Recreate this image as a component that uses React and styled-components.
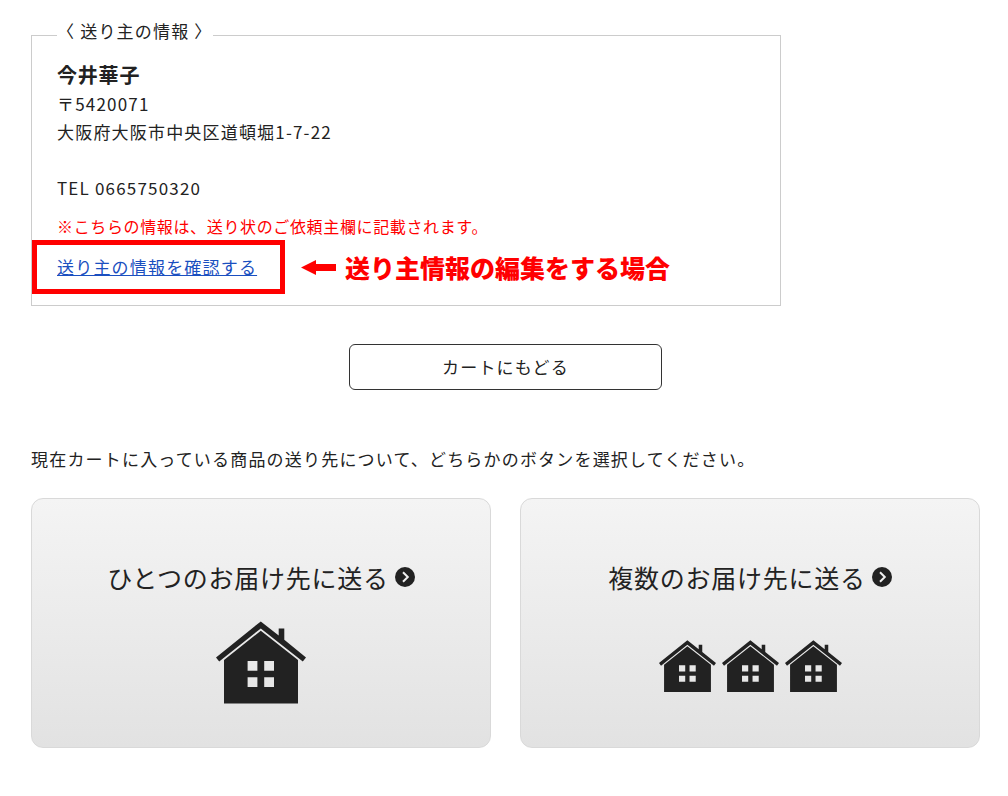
import React from 'react';
import styled, { createGlobalStyle } from 'styled-components';

const GlobalStyle = createGlobalStyle`
  * {
    box-sizing: border-box;
  }

  body {
    margin: 0;
    background: #fff;
    color: #222;
    font-family: 'Noto Sans CJK JP', 'Noto Sans', sans-serif;
    font-size: 17px;
    line-height: 28px;
    letter-spacing: 0.07em;
  }

  button {
    font: inherit;
    letter-spacing: inherit;
    color: inherit;
    cursor: pointer;
  }
`;

const Page = styled.main`
  padding: 17px 28px 48px 31px;
`;

const SenderBox = styled.fieldset`
  max-width: 750px;
  margin: 0;
  padding: 7px 25px 24px;
  border: 1px solid #ccc;
`;

const SenderTitle = styled.legend`
  padding: 0 0 8px;
`;

const SenderName = styled.p`
  margin: 0;
  font-size: 20px;
  font-weight: 700;
  line-height: 30px;
  letter-spacing: 0.04em;
`;

const Address = styled.address`
  font-style: normal;
`;

const Tel = styled.p`
  margin: 28px 0 0;
`;

const Note = styled.p`
  margin: 10px 0 0;
  color: #f00;
  font-size: 16px;
  letter-spacing: 0.04em;
`;

const EditRow = styled.div`
  display: flex;
  align-items: center;
  gap: 44px;
  margin-top: 13px;
`;

const EditLink = styled.a`
  position: relative;
  color: #1a4fc0;
  text-decoration: underline;

  &::after {
    content: '';
    position: absolute;
    inset: -13px -28px -13px -25px;
    border: 5px solid #f00;
    pointer-events: none;
  }
`;

const Hint = styled.strong`
  display: flex;
  align-items: center;
  gap: 9px;
  color: #f00;
  font-size: 25px;
  font-weight: 900;
  letter-spacing: 0;
`;

const BackButton = styled.button`
  display: block;
  width: 33%;
  min-width: 240px;
  margin: 38px auto 0;
  padding: 8px 16px;
  border: 1px solid #333;
  border-radius: 6px;
  background: #fff;
`;

const Lead = styled.p`
  margin: 55px 0 0;
`;

const Choices = styled.div`
  display: grid;
  grid-template-columns: 1fr 1fr;
  gap: 29px;
  margin-top: 25px;
`;

const Choice = styled.button`
  padding: 60px 16px 40px;
  border: 1px solid #d9d9d9;
  border-radius: 12px;
  background: linear-gradient(#f4f4f4, #e2e2e2);
`;

const ChoiceTitle = styled.span`
  display: flex;
  align-items: center;
  justify-content: center;
  gap: 6px;
  font-size: 25px;
  line-height: 36px;
  letter-spacing: 0.03em;
`;

const Houses = styled.span`
  display: flex;
  align-items: center;
  justify-content: center;
  gap: 6px;
  height: 90px;
  margin-top: 22px;
  padding-top: ${({ $small }) => ($small ? '8px' : '0')};
`;

const House = ({ width }) => (
  <svg width={width} viewBox="0 0 90 83" fill="#222" aria-hidden="true">
    <path d="M44.8.4 62.7 14.5V7.6h5.6v11.2L90 36.4l-3.2 4.2L44.8 7.4 3.2 40.6 0 36.4Z" />
    <path
      fillRule="evenodd"
      d="M44.8 9.8 82 39v43.4H8V39ZM31.6 40v9.8h9.8V40Zm16.6 0v9.8H58V40ZM31.6 56.3v9.8h9.8v-9.8Zm16.6 0v9.8H58v-9.8Z"
    />
  </svg>
);

const CircleArrow = () => (
  <svg width="20" height="20" viewBox="0 0 20 20" aria-hidden="true">
    <circle cx="10" cy="10" r="10" fill="#222" />
    <path d="m8 5.2 4.8 4.8L8 14.8" fill="none" stroke="#f0f0f0" strokeWidth="2" />
  </svg>
);

const LeftArrow = () => (
  <svg width="35" height="15" viewBox="0 0 35 15" fill="#f00" aria-hidden="true">
    <path d="M0 7.5 15 0v4h20v7H15v4Z" />
  </svg>
);

const choices = [
  { title: 'ひとつのお届け先に送る', count: 1, size: 90 },
  { title: '複数のお届け先に送る', count: 3, size: 57 },
];

const App = () => (
  <>
    <GlobalStyle />
    <Page>
      <SenderBox>
        <SenderTitle>〈 送り主の情報 〉</SenderTitle>
        <SenderName>今井華子</SenderName>
        <Address>
          〒5420071
          <br />
          大阪府大阪市中央区道頓堀1-7-22
        </Address>
        <Tel>TEL 0665750320</Tel>
        <Note>※こちらの情報は、送り状のご依頼主欄に記載されます。</Note>
        <EditRow>
          <EditLink href="#sender">送り主の情報を確認する</EditLink>
          <Hint>
            <LeftArrow />
            送り主情報の編集をする場合
          </Hint>
        </EditRow>
      </SenderBox>

      <BackButton type="button">カートにもどる</BackButton>

      <Lead>現在カートに入っている商品の送り先について、どちらかのボタンを選択してください。</Lead>

      <Choices>
        {choices.map(({ title, count, size }) => (
          <Choice key={title} type="button">
            <ChoiceTitle>
              {title}
              <CircleArrow />
            </ChoiceTitle>
            <Houses $small={count > 1}>
              {Array.from({ length: count }, (_, i) => (
                <House key={i} width={size} />
              ))}
            </Houses>
          </Choice>
        ))}
      </Choices>
    </Page>
  </>
);

export default App;
